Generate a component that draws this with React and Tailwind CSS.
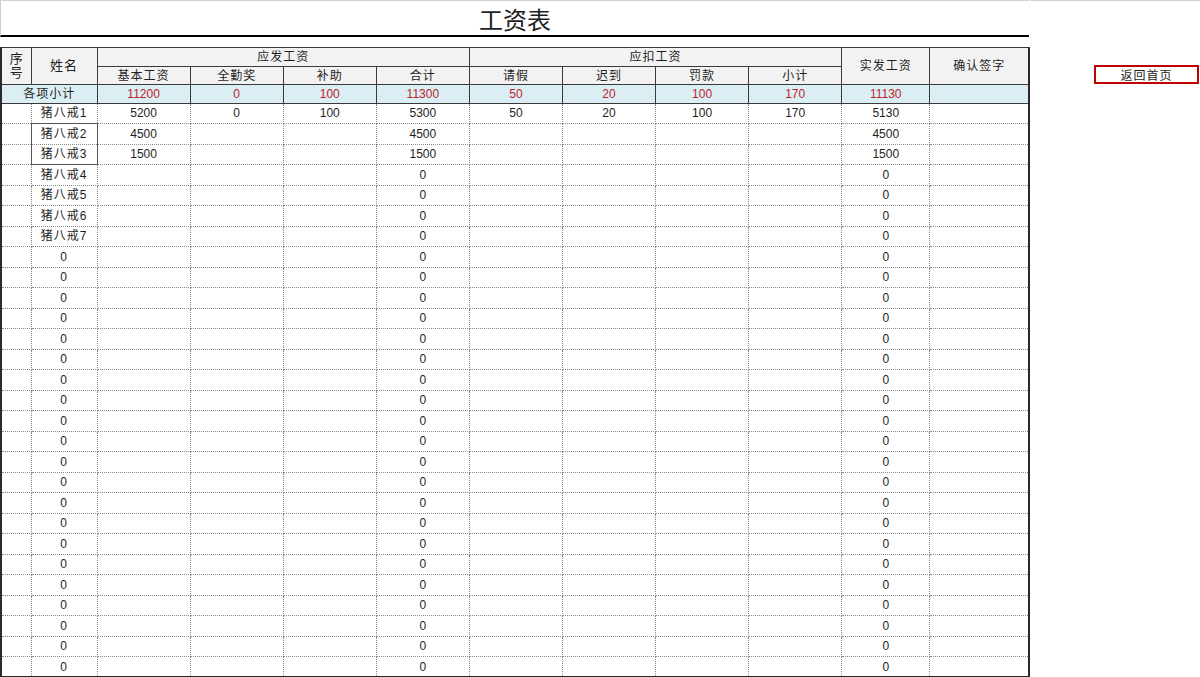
// 工资表：仿 Excel 工资表页面，表头两行 + 小计行 + 明细行
const COLS = [30, 66, 93, 93, 93, 93, 93, 93, 93, 93, 88, 99];

const NAMED = [
  { name: '猪八戒1', base: 5200, full: 0, sub: 100, total: 5300, leave: 50, late: 20, fine: 100, ded: 170, net: 5130 },
  { name: '猪八戒2', base: 4500, total: 4500, net: 4500 },
  { name: '猪八戒3', base: 1500, total: 1500, net: 1500 },
  { name: '猪八戒4', total: 0, net: 0 },
  { name: '猪八戒5', total: 0, net: 0 },
  { name: '猪八戒6', total: 0, net: 0 },
  { name: '猪八戒7', total: 0, net: 0 },
];
const ROWS = [...NAMED, ...Array.from({ length: 21 }, () => ({ name: '0', total: 0, net: 0 }))];

const KEYS = ['base', 'full', 'sub', 'total', 'leave', 'late', 'fine', 'ded', 'net'];
const TOTALS = [11200, 0, 100, 11300, 50, 20, 100, 170, 11130];

const hd = 'border border-solid border-[#3a3a3a] bg-[#f2f2f2] text-center font-normal tracking-[1px] p-0';
const dc = 'border border-dotted border-[#8a8a8a] text-center p-0';
const outL = 'border-l-2 [border-left-style:solid] border-l-[#2a2a2a]';
const outR = 'border-r-2 [border-right-style:solid] border-r-[#2a2a2a]';
const outB = 'border-b-2 [border-bottom-style:solid] border-b-[#2a2a2a]';

export default function App() {
  return (
    <div className="w-[1200px] h-[677px] overflow-hidden bg-white text-[#1e1e1e] font-['Liberation_Sans','Noto_Sans_CJK_SC',sans-serif] flex">
      <div className="w-[1030px] shrink-0">
        {/* 标题 */}
        <div className="w-[1029px] h-[37px] border-t border-l border-[#cfcfcf] border-b-2 border-b-black flex items-center justify-center">
          <span className="text-[24px] leading-none font-['Noto_Sans_CJK_SC',sans-serif] pt-[1px]">工资表</span>
        </div>
        <div className="h-[10px]" />

        <table className="w-[1030px] table-fixed border-collapse text-[12px] leading-[14px]">
          <colgroup>
            {COLS.map((w, i) => <col key={i} style={{ width: w }} />)}
          </colgroup>
          <thead>
            <tr className="h-[19px]">
              <th rowSpan={2} className={`${hd} ${outL} text-[13px] leading-[14px] tracking-normal`}>序<br />号</th>
              <th rowSpan={2} className={`${hd} text-[13px]`}>姓名</th>
              <th colSpan={4} className={hd}>应发工资</th>
              <th colSpan={4} className={hd}>应扣工资</th>
              <th rowSpan={2} className={hd}>实发工资</th>
              <th rowSpan={2} className={`${hd} ${outR}`}>确认签字</th>
            </tr>
            <tr className="h-[18px]">
              {['基本工资', '全勤奖', '补助', '合计', '请假', '迟到', '罚款', '小计'].map((t) => (
                <th key={t} className={hd}>{t}</th>
              ))}
            </tr>
          </thead>
          <tbody>
            <tr className="h-[18.5px] bg-[#daeef3]">
              <td colSpan={2} className={`border border-solid border-[#3a3a3a] ${outL} text-center tracking-[1px] p-0`}>各项小计</td>
              {TOTALS.map((v, i) => (
                <td key={i} className="border border-solid border-[#3a3a3a] text-center text-[#c0232b] p-0">{v}</td>
              ))}
              <td className={`border border-solid border-[#3a3a3a] ${outR} p-0`} />
            </tr>
            {ROWS.map((r, i) => {
              const last = i === ROWS.length - 1 ? outB : '';
              const boxed = i === 1 || i === 2
                ? '[border-left-style:solid] [border-right-style:solid] border-l-[#555] border-r-[#555]'
                : '';
              const boxT = i === 1 ? '[border-top-style:solid] border-t-[#555]' : '';
              const boxB = i === 2 ? '[border-bottom-style:solid] border-b-[#555]' : '';
              return (
                <tr key={i} className="h-[20.5px]">
                  <td className={`${dc} ${outL} ${last}`} />
                  <td className={`${dc} tracking-[1px] ${boxed} ${boxT} ${boxB} ${last}`}>{r.name}</td>
                  {KEYS.map((k) => (
                    <td key={k} className={`${dc} ${last}`}>{r[k] ?? ''}</td>
                  ))}
                  <td className={`${dc} ${outR} ${last}`} />
                </tr>
              );
            })}
          </tbody>
        </table>
      </div>

      {/* 返回首页 */}
      <div className="flex-1 border-t border-[#cfcfcf] pl-[64px] pt-[64px]">
        <button className="w-[105px] h-[19px] border-2 border-[#c00000] bg-white text-[12px] leading-none tracking-[1px] font-['Noto_Sans_CJK_SC',sans-serif] flex items-center justify-center">
          返回首页
        </button>
      </div>
    </div>
  );
}
